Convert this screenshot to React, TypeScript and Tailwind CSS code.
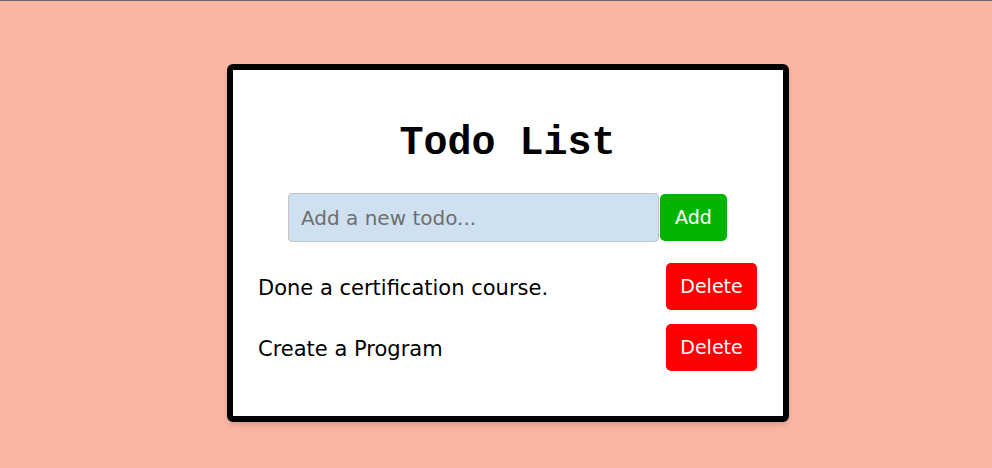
const todos = ["Done a certification course.", "Create a Program"];

const comic = "font-['Comic_Sans_MS','DejaVu_Sans',sans-serif]";

export default function App() {
  return (
    <div className="h-[468px] bg-[#fcb5a2] border-t border-[#6b6b6b] flex justify-center pl-6 pt-[63px]">
      <div className="w-[562px] h-[358px] bg-white border-[6px] border-black rounded-[6px] shadow-md pl-[25px] pr-[26px]">
        <h1 className="font-['Liberation_Mono','Courier_New',monospace] font-bold text-[40px] leading-none text-center mt-[54px] text-black">
          Todo List
        </h1>
        <div className="flex justify-center mt-[29px]">
          <input
            placeholder="Add a new todo..."
            className={`${comic} w-[371px] h-[49px] bg-[#cfe0f0] border border-[#c4c4c4] rounded-[4px] px-3 pt-px text-[20px] placeholder:text-[#6e6e6e] outline-none`}
          />
          <button className={`${comic} ml-px mt-px w-[67px] h-[47px] bg-[#00b400] text-white text-[19px] rounded-[5px]`}>
            Add
          </button>
        </div>
        <ul className="mt-[21px] flex flex-col gap-[14px]">
          {todos.map((t) => (
            <li key={t} className="flex items-center justify-between">
              <span className={`${comic} text-[21px] text-black pt-[5px]`}>{t}</span>
              <button className={`${comic} w-[91px] h-[47px] bg-[#ff0000] text-white text-[19px] rounded-[5px]`}>
                Delete
              </button>
            </li>
          ))}
        </ul>
      </div>
    </div>
  );
}
